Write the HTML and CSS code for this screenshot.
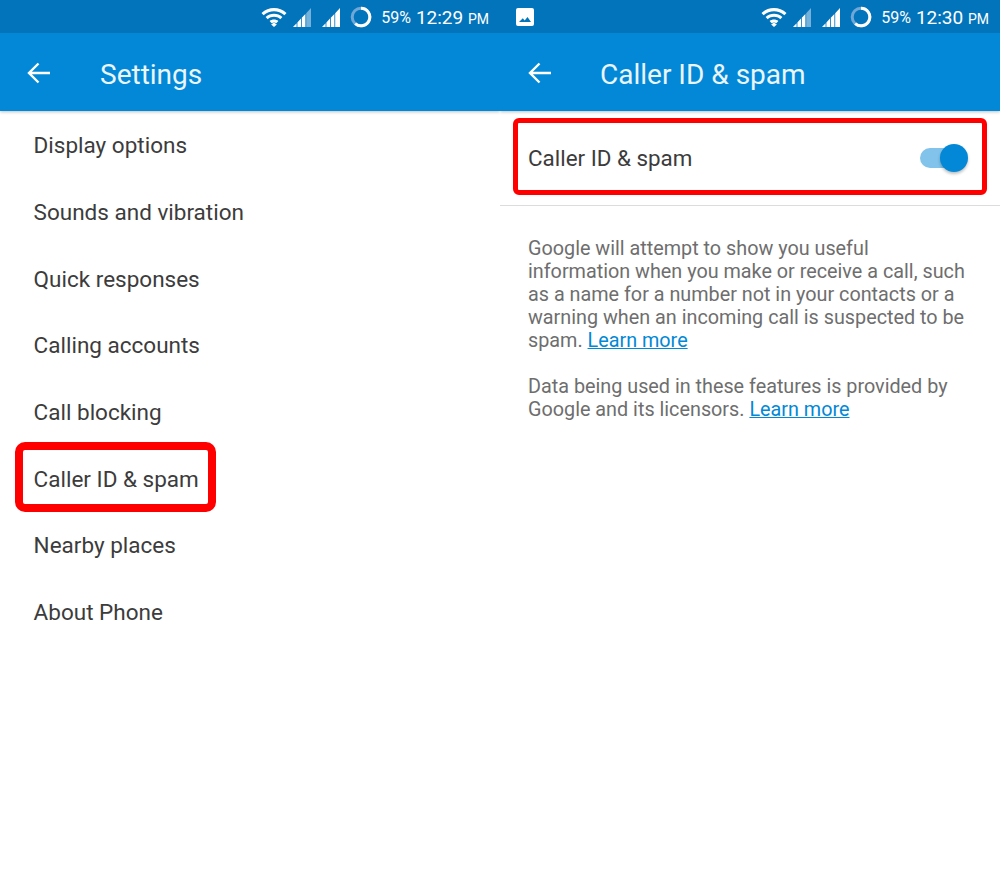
FILE: index.html
```html
<!DOCTYPE html>
<html lang="en">
<head>
  <meta charset="UTF-8">
  <title>Caller ID settings</title>
  <link rel="stylesheet" href="styles.css">
</head>
<body>
  <svg class="defs" width="0" height="0">
    <symbol id="wifi" viewBox="0 0 26 20">
      <path d="M0.5 6 C7.5 -0.6 18.5 -0.6 25.5 6 L23.4 8.3 C17.4 2.8 8.6 2.8 2.6 8.3 Z"/>
      <path d="M4.6 10 C9.5 5.6 16.5 5.6 21.4 10 L19.3 12.2 C15.6 9 10.4 9 6.7 12.2 Z"/>
      <path d="M8.6 14 C11 12 15 12 17.4 14 L15.3 16.2 C14 15.2 12 15.2 10.7 16.2 Z"/>
      <path d="M10.2 17.4 L13 15.6 L15.8 17.4 L13 20 Z"/>
    </symbol>
    <symbol id="signal-weak" viewBox="0 0 18 20">
      <path d="M0 20 L3.6 16.2 V20 Z M4.4 15.4 L8 11.6 V20 H4.4 Z M8.8 10.8 L12.4 7 V20 H8.8 Z"/>
      <path opacity=".45" d="M13.2 6.2 L18 1 V20 H13.2 Z"/>
    </symbol>
    <symbol id="signal-full" viewBox="0 0 18 20">
      <path d="M0 20 L3.6 16.2 V20 Z M4.4 15.4 L8 11.6 V20 H4.4 Z M8.8 10.8 L12.4 7 V20 H8.8 Z M13.2 6.2 L18 1 V20 H13.2 Z"/>
    </symbol>
    <symbol id="battery" viewBox="0 0 22 22">
      <circle cx="11" cy="11" r="8.8" fill="none" stroke="#6fa8d6" stroke-width="3"/>
      <path d="M11 2.2 A8.8 8.8 0 1 1 5.2 17.6" fill="none" stroke="#fff" stroke-width="3"/>
    </symbol>
    <symbol id="back" viewBox="0 0 24 22">
      <path d="M23 11 H2 M11.5 1.5 L2 11 L11.5 20.5" fill="none" stroke="#fff" stroke-width="2.4"/>
    </symbol>
  </svg>

  <div class="screens">
    <section class="phone phone-settings">
      <div class="status-bar">
        <svg class="ic-wifi"><use href="#wifi"/></svg>
        <svg class="ic-signal"><use href="#signal-weak"/></svg>
        <svg class="ic-signal"><use href="#signal-full"/></svg>
        <svg class="ic-battery"><use href="#battery"/></svg>
        <span class="battery-text">59%</span>
        <span class="clock">12:29 <small>PM</small></span>
      </div>
      <header class="app-bar">
        <svg class="ic-back"><use href="#back"/></svg>
        <h1 class="app-title">Settings</h1>
      </header>
      <ul class="menu">
        <li>Display options</li>
        <li>Sounds and vibration</li>
        <li>Quick responses</li>
        <li>Calling accounts</li>
        <li>Call blocking</li>
        <li>Caller ID &amp; spam</li>
        <li>Nearby places</li>
        <li>About Phone</li>
      </ul>
      <div class="callout callout-menu"></div>
    </section>

    <section class="phone phone-caller">
      <div class="status-bar">
        <svg class="ic-picture" viewBox="0 0 18 18">
          <path fill-rule="evenodd" d="M2 0 H16 A2 2 0 0 1 18 2 V16 A2 2 0 0 1 16 18 H2 A2 2 0 0 1 0 16 V2 A2 2 0 0 1 2 0 Z M3 14 H15 L11.5 9 L8.7 12.4 L6.8 10.2 Z"/>
        </svg>
        <svg class="ic-wifi"><use href="#wifi"/></svg>
        <svg class="ic-signal"><use href="#signal-weak"/></svg>
        <svg class="ic-signal"><use href="#signal-full"/></svg>
        <svg class="ic-battery"><use href="#battery"/></svg>
        <span class="battery-text">59%</span>
        <span class="clock">12:30 <small>PM</small></span>
      </div>
      <header class="app-bar">
        <svg class="ic-back"><use href="#back"/></svg>
        <h1 class="app-title">Caller ID &amp; spam</h1>
      </header>
      <div class="toggle-row">
        <span>Caller ID &amp; spam</span>
        <div class="switch"><div class="switch-thumb"></div></div>
      </div>
      <div class="about">
        <p>Google will attempt to show you useful information when you make or receive a call, such as a name for a number not in your contacts or a warning when an incoming call is suspected to be spam. <a href="#">Learn more</a></p>
        <p>Data being used in these features is provided by Google and its licensors. <a href="#">Learn more</a></p>
      </div>
      <div class="callout callout-toggle"></div>
    </section>
  </div>
</body>
</html>
```

FILE: styles.css
```css
html, body {
  margin: 0;
  height: 889px;
  overflow: hidden;
  background-color: #fff;
  font-family: Roboto, "Liberation Sans", sans-serif;
}

.defs {
  position: absolute;
}

.screens {
  display: flex;
}

.phone {
  position: relative;
  width: 500px;
  height: 889px;
}

/* status bar */
.status-bar {
  display: flex;
  align-items: center;
  justify-content: flex-end;
  height: 33px;
  padding: 0 11px 0 0;
  background-color: #0274bb;
  color: #fff;
  fill: #fff;
}

.ic-picture {
  width: 18px;
  height: 18px;
  margin-right: auto;
  margin-left: 16px;
}

.ic-wifi {
  width: 26px;
  height: 20px;
  margin-right: 6px;
}

.ic-signal {
  width: 18px;
  height: 20px;
  margin-right: 11px;
}

.ic-battery {
  width: 22px;
  height: 22px;
  margin-right: 9px;
  margin-left: -1px;
}

.battery-text {
  margin-top: 2px;
  margin-right: 5px;
  font-size: 16px;
}

.clock {
  margin-top: 2px;
  font-size: 19px;
}

.clock small {
  font-size: 14px;
}

/* app bar */
.app-bar {
  display: flex;
  align-items: center;
  height: 78px;
  background-color: #0288d6;
  box-shadow: 0 1px 3px rgba(0,0,0,0.25);
  clip-path: inset(0 0 -5px 0);
}

.ic-back {
  width: 24px;
  height: 22px;
  margin-top: 2px;
  margin-left: 27px;
}

.app-title {
  margin: 4px 0 0 49px;
  font-size: 28px;
  font-weight: 400;
  color: #eaf5fc;
}

.phone-caller .app-title {
  margin-left: 48px;
}

.phone-caller .ic-back {
  margin-left: 28px;
}

/* settings list */
.menu {
  list-style: none;
  margin: 0;
  padding: 1px 0 0;
}

.menu li {
  display: flex;
  align-items: center;
  height: 66.7px;
  padding-left: 33.6px;
  font-size: 22.5px;
  color: #3c3c3c;
}

/* caller id screen */
.toggle-row {
  display: flex;
  align-items: center;
  justify-content: space-between;
  height: 94px;
  padding: 0 38px 0 28px;
  border-bottom: 1px solid #dcdcdc;
  font-size: 22.4px;
  color: #3c3c3c;
}

.switch {
  position: relative;
  width: 42px;
  height: 20px;
  margin-top: -1px;
  border-radius: 10px;
  background-color: #81c3ea;
}

.switch-thumb {
  position: absolute;
  top: -4px;
  right: -6px;
  width: 28px;
  height: 28px;
  border-radius: 50%;
  background-color: #0288d6;
  box-shadow: 0 2px 3px rgba(0,0,0,0.25);
}

.about {
  padding: 31px 28px 0;
  font-size: 19.8px;
  line-height: 23px;
  color: #6e6e6e;
}

.about p {
  margin: 0 0 23px;
}

.about a {
  color: #0288d6;
}

/* red annotation boxes */
.callout {
  position: absolute;
  box-sizing: border-box;
  border-style: solid;
  border-color: #f00;
}

.callout-menu {
  left: 15px;
  top: 442px;
  width: 201px;
  height: 70px;
  border-width: 8px;
  border-radius: 10px;
}

.callout-toggle {
  left: 13px;
  top: 118px;
  width: 474px;
  height: 77px;
  border-width: 5px;
  border-radius: 6px;
}
```
